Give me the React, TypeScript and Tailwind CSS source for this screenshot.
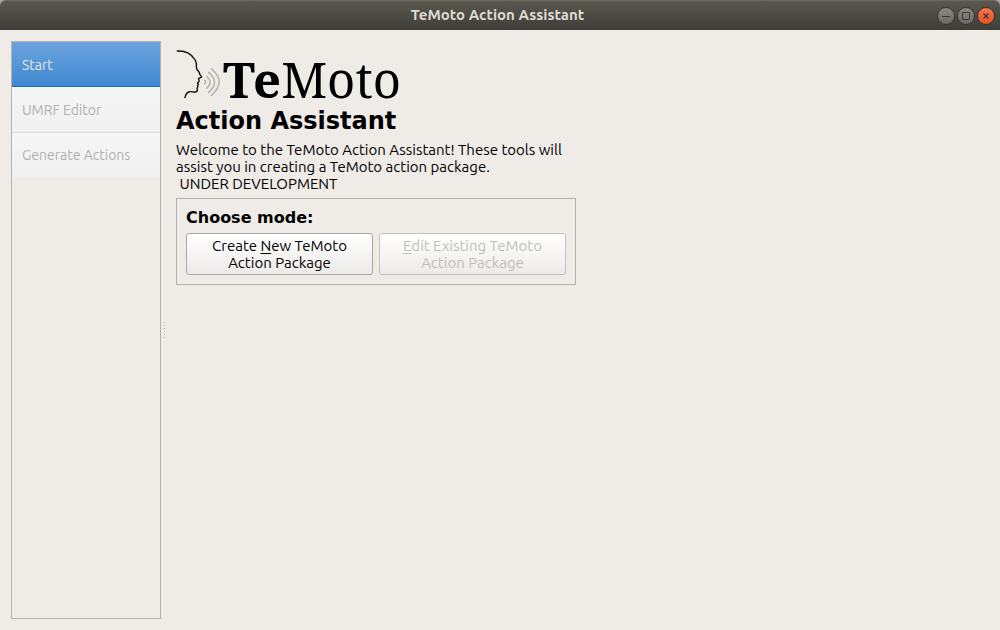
import clsx from "clsx"

const steps = [
  { id: "start", label: "Start" },
  { id: "umrf", label: "UMRF Editor" },
  { id: "generate", label: "Generate Actions" },
]

function WindowButton({ label, close, children }: { label: string; close?: boolean; children: React.ReactNode }) {
  return (
    <button
      type="button"
      aria-label={label}
      className={clsx(
        "flex size-[18px] items-center justify-center rounded-full border border-[#35342f] bg-linear-to-b",
        close ? "from-[#f9734a] to-[#e6531f]" : "from-[#8b8981] to-[#6b6963]"
      )}
    >
      <svg viewBox="0 0 16 16" className="size-4 shrink-0" fill="none" stroke="#3a3934" strokeWidth="1">
        {children}
      </svg>
    </button>
  )
}

function TitleBar() {
  return (
    <div className="bg-[#a9a6ab]">
      <header className="grid h-[30px] grid-cols-[1fr_auto_1fr] items-center rounded-t-md border-t border-[#6b6860] bg-linear-to-b from-[#5b5850] to-[#3e3d38] pr-[5px]">
        <span />
        <h1 className="pb-[2px] text-[15px] leading-[17px] font-bold text-[#dfdbd2]">TeMoto Action Assistant</h1>
        <div className="flex justify-end gap-[2px]">
          <WindowButton label="Minimize">
            <path d="M4 8.5h8" />
          </WindowButton>
          <WindowButton label="Maximize">
            <path d="M4.5 4.5h7v7h-7z" />
          </WindowButton>
          <WindowButton label="Close" close>
            <path d="M5.5 5.5l5 5M10.5 5.5l-5 5" strokeWidth="1.3" />
          </WindowButton>
        </div>
      </header>
    </div>
  )
}

function Logo() {
  return (
    <div className="flex h-[54px] items-start gap-px">
      <svg viewBox="0 0 46 50" className="h-[50px] w-[46px]" fill="none" strokeLinecap="round" strokeLinejoin="round">
        <path
          d="M1.3 1C9 .6 15.5 4 18.8 9.5C20.3 12 20.8 13.6 20.4 15.5C19.8 18.5 21 20 22.8 21.8C23.8 23 23.2 24 24.2 25L25.6 26.8C25.4 27.8 23.8 27.7 22.6 28.3C22.4 29.6 23.6 30.6 22.8 31.8L21.4 33L22.5 34.4L21.5 35.6C22.5 37 20.9 37.6 21.1 38.8C21.7 40.6 21.3 41.6 19.4 42C17 42.3 14.5 41 12.5 42C10.5 43 9.5 45 9 47.6"
          stroke="#111"
          strokeWidth="1.4"
        />
        <g stroke="#b3b1ae" strokeWidth="1.5">
          <path d="M28.6 30.4Q30.6 32 28.6 33.8" />
          <path d="M30.6 26.5Q37.6 32 30.6 38.3" />
          <path d="M32.6 22.4Q44.4 32 32.6 42.4" />
          <path d="M35.4 18.8Q51 32 35.4 45.4" />
        </g>
      </svg>
      <span className="font-['Noto_Serif','Liberation_Serif',serif] text-[49px] leading-[58px] text-black">
        <b>Te</b>Moto
      </span>
    </div>
  )
}

function StepList() {
  return (
    <nav className="flex w-[150px] flex-col border border-[#b5b2ae]">
      {steps.map((step, i) => (
        <button
          key={step.id}
          type="button"
          disabled={i > 0}
          className={clsx(
            "h-[45px] px-[10px] text-left text-sm",
            i === 0 && "border-b border-[#1f68b0] bg-linear-to-b from-[#6ba3dc] to-[#3f89d3] pt-[2px] text-[#e6e6e6]",
            i > 0 && "border-t bg-linear-to-b from-[#f6f6f6] to-[#f0f0f0] text-[#b0b0b0]",
            i === 1 && "border-[#fafafa]",
            i === 2 && "border-[#dcdcdc]"
          )}
        >
          {step.label}
        </button>
      ))}
    </nav>
  )
}

const modeButton =
  "h-[42px] flex-1 rounded-[3px] border bg-linear-to-b from-white to-[#edebe8] text-center text-[15px] leading-[17px]"

export default function App() {
  return (
    <div className="flex min-h-screen flex-col bg-[#efebe7] font-['Ubuntu','Noto_Sans',sans-serif] text-black">
      <TitleBar />
      <div className="flex flex-1 py-[11px] pl-[11px]">
        <StepList />

        {/* Splitter grip */}
        <div className="flex w-[6px] flex-col items-end justify-center gap-[2px] pr-[2px]">
          {[0, 1, 2, 3, 4, 5].map((dot) => (
            <span key={dot} className="size-px bg-[#b5b2ae]" />
          ))}
        </div>

        <main className="flex-1 pt-[9px] pl-[9px]">
          <Logo />
          <h2 className="mt-px font-['DejaVu_Sans',sans-serif] text-2xl leading-8 font-bold">Action Assistant</h2>
          <p className="mt-1 max-w-[400px] text-[15px] leading-[17px]">
            Welcome to the TeMoto Action Assistant! These tools will
            <br />
            assist you in creating a TeMoto action package.
            <br />
            &nbsp;UNDER DEVELOPMENT
          </p>

          <section className="mt-[6px] max-w-[400px] border border-[#b5b2ae] p-[9px]">
            <h3 className="font-['DejaVu_Sans',sans-serif] text-base leading-5 font-bold">Choose mode:</h3>
            <div className="mt-[5px] flex gap-[6px]">
              <button type="button" className={clsx(modeButton, "border-[#a9a6a2]")}>
                Create <u className="underline-offset-2">N</u>ew TeMoto
                <br />
                Action Package
              </button>
              <button type="button" disabled className={clsx(modeButton, "border-[#c3c0bd] text-[#c0bfbd]")}>
                <u className="underline-offset-2">E</u>dit Existing TeMoto
                <br />
                Action Package
              </button>
            </div>
          </section>
        </main>
      </div>
    </div>
  )
}
